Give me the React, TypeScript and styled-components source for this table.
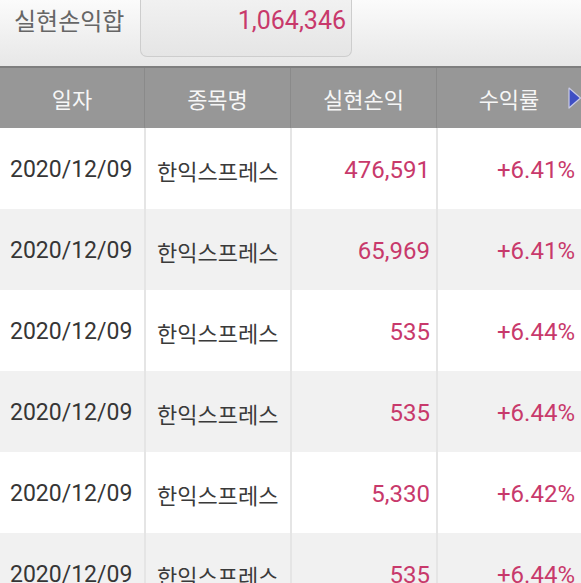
import styled, { createGlobalStyle } from "styled-components";

const GlobalStyles = createGlobalStyle`
  html, body {
    margin: 0;
    padding: 0;
    background: #ffffff;
    overflow: hidden;
  }
  body {
    width: 581px;
    height: 583px;
    font-family: Roboto, "Noto Sans CJK KR", sans-serif;
  }
`;

const PINK = "#c8396b";
const KR = `"Noto Sans CJK KR", Roboto, sans-serif`;

const ROWS = [
  { date: "2020/12/09", name: "한익스프레스", profit: "476,591", rate: "+6.41%" },
  { date: "2020/12/09", name: "한익스프레스", profit: "65,969", rate: "+6.41%" },
  { date: "2020/12/09", name: "한익스프레스", profit: "535", rate: "+6.44%" },
  { date: "2020/12/09", name: "한익스프레스", profit: "535", rate: "+6.44%" },
  { date: "2020/12/09", name: "한익스프레스", profit: "5,330", rate: "+6.42%" },
  { date: "2020/12/09", name: "한익스프레스", profit: "535", rate: "+6.44%" },
];

const Screen = styled.div`
  width: 581px;
  height: 583px;
  overflow: hidden;
  display: flex;
  flex-direction: column;
`;

const Summary = styled.div`
  height: 66px;
  flex-shrink: 0;
  display: flex;
  align-items: flex-start;
  background: linear-gradient(#fbfbfb, #e7e7e7);
`;

const SummaryLabel = styled.div`
  width: 140px;
  box-sizing: border-box;
  padding: 4px 0 0 14px;
  font-family: ${KR};
  font-size: 24px;
  line-height: 32px;
  color: #666666;
`;

const SummaryBox = styled.div`
  width: 212px;
  height: 57px;
  box-sizing: border-box;
  border: 1px solid #cdcdcd;
  border-top: none;
  border-radius: 0 0 7px 7px;
  background: linear-gradient(#f1f1f1, #e5e5e5);
  padding: 4px 5px 0 0;
  text-align: right;
  font-size: 25px;
  line-height: 34px;
  color: ${PINK};
`;

const HeaderRow = styled.div`
  position: relative;
  height: 62px;
  flex-shrink: 0;
  box-sizing: border-box;
  border-top: 2px solid #7e7e7e;
  background: #979797;
  display: grid;
  grid-template-columns: 144px 146px 146px 1fr;
`;

const HeaderCell = styled.div<{ $first?: boolean }>`
  display: flex;
  align-items: center;
  justify-content: center;
  border-left: ${({ $first }) => ($first ? "none" : "1px solid #8a8a8a")};
  font-family: ${KR};
  font-size: 22px;
  color: #f6f6f6;
`;

const MoreArrow = styled.svg`
  position: absolute;
  right: 0;
  top: 19px;
  width: 13px;
  height: 22px;
`;

const Row = styled.div<{ $alt: boolean }>`
  height: 81px;
  flex-shrink: 0;
  display: grid;
  grid-template-columns: 144px 146px 146px 1fr;
  background: ${({ $alt }) => ($alt ? "#f1f1f1" : "#ffffff")};
`;

const Cell = styled.div<{ $align: "left" | "right"; $first?: boolean; $pad: number }>`
  display: flex;
  align-items: center;
  justify-content: ${({ $align }) => ($align === "left" ? "flex-start" : "flex-end")};
  box-sizing: border-box;
  border-left: ${({ $first }) => ($first ? "none" : "2px solid #e5e5e5")};
  padding: ${({ $align, $pad }) => ($align === "left" ? `2px 0 0 ${$pad}px` : `2px ${$pad}px 0 0`)};
  white-space: nowrap;
`;

const DateText = styled.span`
  font-size: 23px;
  color: #363636;
`;

const NameText = styled.span`
  font-family: ${KR};
  font-size: 22px;
  color: #3a3a3a;
`;

const NumText = styled.span`
  font-size: 24px;
  color: ${PINK};
`;

export default function App() {
  return (
    <>
      <GlobalStyles />
      <Screen>
        <Summary>
          <SummaryLabel>실현손익합</SummaryLabel>
          <SummaryBox>1,064,346</SummaryBox>
        </Summary>
        <HeaderRow>
          <HeaderCell $first>일자</HeaderCell>
          <HeaderCell>종목명</HeaderCell>
          <HeaderCell>실현손익</HeaderCell>
          <HeaderCell>수익률</HeaderCell>
          <MoreArrow viewBox="0 0 13 22">
            <path d="M1 1 L12.5 11 L1 21 Z" fill="#3f4fc4" stroke="#c9cbe6" strokeWidth="1.2" strokeLinejoin="round" />
          </MoreArrow>
        </HeaderRow>
        {ROWS.map((r, i) => (
          <Row key={i} $alt={i % 2 === 1}>
            <Cell $align="left" $first $pad={10}>
              <DateText>{r.date}</DateText>
            </Cell>
            <Cell $align="left" $pad={11}>
              <NameText>{r.name}</NameText>
            </Cell>
            <Cell $align="right" $pad={6}>
              <NumText>{r.profit}</NumText>
            </Cell>
            <Cell $align="right" $pad={6}>
              <NumText>{r.rate}</NumText>
            </Cell>
          </Row>
        ))}
      </Screen>
    </>
  );
}
